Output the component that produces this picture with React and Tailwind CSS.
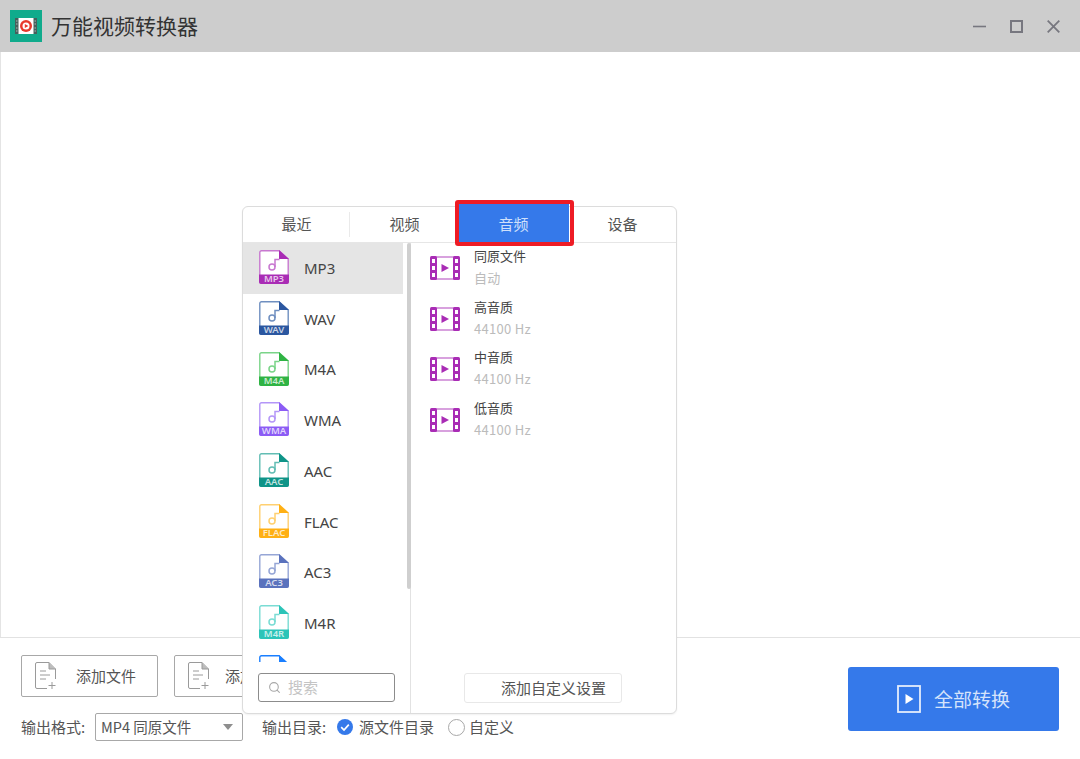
import React from "react";
import { Search } from "lucide-react";

const cjk = "font-['Noto_Sans_CJK_SC','Noto_Sans',sans-serif]";

const formats = [
  { name: "MP3", color: "#a92cb5", light: "#c878d0" },
  { name: "WAV", color: "#2b57a0", light: "#6f8fc0" },
  { name: "M4A", color: "#2fb344", light: "#7ad488" },
  { name: "WMA", color: "#8c5cf5", light: "#b496f8" },
  { name: "AAC", color: "#0f9488", light: "#62bdb4" },
  { name: "FLAC", color: "#ffb014", light: "#ffd070" },
  { name: "AC3", color: "#5a72bd", light: "#96a6d6" },
  { name: "M4R", color: "#2cc4b8", light: "#7adcd4" },
];

const qualities = [
  { title: "同原文件", sub: "自动" },
  { title: "高音质", sub: "44100 Hz" },
  { title: "中音质", sub: "44100 Hz" },
  { title: "低音质", sub: "44100 Hz" },
];

const FileIcon = ({ label, color, light }) => (
  <svg width="30" height="34" viewBox="0 0 30 34" className="shrink-0 mb-[2px]">
    <path d="M2.5.8H20L29.2 9V31.5a1.7 1.7 0 0 1-1.7 1.7H2.5A1.7 1.7 0 0 1 .8 31.5V2.5A1.7 1.7 0 0 1 2.5.8Z" fill="#fff" stroke={light} strokeWidth="1.4" />
    <path d="M20 0 30 9H20Z" fill={color} />
    <path d="M0 24.5H30V32a2 2 0 0 1-2 2H2a2 2 0 0 1-2-2Z" fill={color} />
    <circle cx="13" cy="17" r="3" fill="none" stroke={light} strokeWidth="1.5" />
    <path d="M16 17V9.5H20.5" fill="none" stroke={light} strokeWidth="1.5" />
    <text x="15" y="32.3" textAnchor="middle" fontSize="9.5" fontFamily="Noto Sans, sans-serif" fontWeight="600" fill="#fff" fillOpacity="0.75">{label}</text>
  </svg>
);

const FilmIcon = () => (
  <svg width="30" height="24" viewBox="0 0 30 24" className="shrink-0">
    <rect x="6" y="1" width="18" height="22" fill="#fff" stroke="#cf8ad6" strokeWidth="1.6" />
    <rect x="0" y="0" width="7" height="24" rx="1.5" fill="#a92cb5" />
    <rect x="23" y="0" width="7" height="24" rx="1.5" fill="#a92cb5" />
    <path d="M2 3H5V7H2ZM2 10H5V14H2ZM2 17H5V21H2ZM25 3H28V7H25ZM25 10H28V14H25ZM25 17H28V21H25Z" fill="#fff" />
    <path d="M11.5 8 19 12l-7.5 4Z" fill="#a92cb5" />
  </svg>
);

const AddFileIcon = () => (
  <svg width="22" height="28" viewBox="0 0 22 28" className="shrink-0" fill="none" stroke="#9a9a9a" strokeWidth="1">
    <path d="M12 26.5H2a1.5 1.5 0 0 1-1.5-1.5V2A1.5 1.5 0 0 1 2 .5H14L20.5 7V17" />
    <path d="M14 .5V7H20.5" fill="#bdbdbd" />
    <path d="M5 9H11M5 13H15M5 17H11" />
    <path d="M17 20V27M13.5 23.5H20.5" />
  </svg>
);

const Logo = () => (
  <svg width="32" height="32" viewBox="0 0 32 32" className="shrink-0">
    <rect width="32" height="32" fill="#10ab8c" />
    <rect x="5" y="8" width="22" height="16" fill="#fff" />
    <rect x="5" y="8" width="3.5" height="16" fill="#46605c" />
    <rect x="23.5" y="8" width="3.5" height="16" fill="#46605c" />
    <path d="M6 11H7.5M6 14H7.5M6 18H7.5M6 21H7.5M24.5 11H26M24.5 14H26M24.5 18H26M24.5 21H26" stroke="#a9b8b6" strokeWidth="1" />
    <circle cx="16" cy="16" r="6" fill="#e8392c" />
    <circle cx="16" cy="16" r="3.5" fill="#fff" />
    <path d="M14.8 14 18.4 16l-3.6 2Z" fill="#e8392c" />
  </svg>
);

const AddButton = ({ label, textClass }) => (
  <button className="w-[137px] h-[42px] border border-[#a8a8a8] rounded-[2px] bg-white flex items-center pl-[13px]">
    <AddFileIcon />
    <span className={`text-[15px] text-[#555] whitespace-nowrap ${textClass}`}>{label}</span>
  </button>
);

const Radio = ({ checked }) =>
  checked ? (
    <svg width="16" height="16" viewBox="0 0 16 16" className="shrink-0">
      <circle cx="8" cy="8" r="8" fill="#3579ea" />
      <path d="M4.2 8.2 7 11l4.8-5.4" fill="none" stroke="#fff" strokeWidth="1.7" />
    </svg>
  ) : (
    <span className="block w-[17px] h-[17px] rounded-full border border-[#a8a8a8] shrink-0" />
  );

const FormatPopup = () => (
  <div className="absolute left-[242px] top-[206px] w-[435px] h-[508px] bg-white border border-[#dcdcdc] rounded-[6px] flex flex-col shadow-[0_1px_2px_rgba(0,0,0,0.06)]">
    <div className="h-[36px] flex border-b border-[#e6e6e6] shrink-0 text-[15px] text-[#555]">
      <div className="w-[107px] flex items-center justify-center relative">
        最近
        <span className="absolute right-0 top-[5px] h-[25px] w-px bg-[#eaeaea]" />
      </div>
      <div className="w-[109px] flex items-center justify-center">视频</div>
      <div className="w-[110px] -mt-[3px] pt-[3px] pr-[1px] flex items-center justify-center bg-[#3579ea] text-[#cfe0fb]">音频</div>
      <div className="flex-1 flex items-center justify-center">设备</div>
    </div>

    <div className="flex flex-1 min-h-0">
      <div className="w-[168px] border-r border-[#e2e2e2] flex flex-col relative shrink-0">
        <div className="h-[419px] overflow-hidden shrink-0">
          {formats.map((f, i) => (
            <div key={f.name} className={`w-[160px] h-[50.7px] flex items-center pl-[16px] ${i === 0 ? "bg-[#e5e5e5]" : ""}`}>
              <FileIcon label={f.name} color={f.color} light={f.light} />
              <span className="ml-[15px] text-[15px] text-[#444] font-['Noto_Sans',sans-serif]">{f.name}</span>
            </div>
          ))}
          <div className="pl-[16px] pt-[6px]">
            <FileIcon label="" color="#1a7fff" light="#1a7fff" />
          </div>
        </div>
        <div className="absolute left-[164px] top-0 w-[4px] h-[346px] bg-[#cfcfcf] rounded-[2px]" />
        <div className="mt-[11px] ml-[15px] w-[137px] h-[29px] border border-[#8c8c8c] rounded-[3px] flex items-center pl-[9px]">
          <Search size={13} color="#a8a8a8" />
          <span className="ml-[7px] text-[15px] text-[#c4c4c4]">搜索</span>
        </div>
      </div>

      <div className="flex-1 flex flex-col">
        <div className="flex-1">
          {qualities.map((q) => (
            <div key={q.title} className="h-[50.7px] flex items-start pl-[19px] pt-[13px]">
              <FilmIcon />
              <div className="ml-[14px] -mt-[9px]">
                <div className="text-[13px] leading-[18px] text-[#444]">{q.title}</div>
                <div className="mt-[4px] text-[13px] leading-[18px] tracking-[0.3px] text-[#bbb]">{q.sub}</div>
              </div>
            </div>
          ))}
        </div>
        <button className="ml-[53px] mb-[10px] w-[158px] h-[30px] border border-[#e8e8e8] rounded-[3px] text-[15px] text-[#555] text-left pl-[36px] whitespace-nowrap">
          添加自定义设置
        </button>
      </div>
    </div>

    {/* 红框标注 */}
    <div className="absolute left-[212px] -top-[7px] w-[119px] h-[46px] border-[4px] border-[#ee1c25] rounded-[3px]" />
  </div>
);

const App = () => {
  return (
    <div className={`relative w-full h-screen flex flex-col bg-white overflow-hidden ${cjk}`}>
      <div className="h-[52px] bg-[#cdcdcd] flex items-center pl-[10px] pr-[20px] shrink-0">
        <Logo />
        <span className="ml-[9px] text-[21px] text-[#333] whitespace-nowrap">万能视频转换器</span>
        <div className="ml-auto flex items-center gap-[24px] text-[#77777f]">
          <svg width="13" height="13" viewBox="0 0 13 13"><path d="M0 6.5H13" stroke="currentColor" strokeWidth="1.6" /></svg>
          <svg width="13" height="13" viewBox="0 0 13 13"><rect x="1" y="1" width="11" height="11" fill="none" stroke="currentColor" strokeWidth="2" /></svg>
          <svg width="13" height="13" viewBox="0 0 13 13"><path d="M.7.7 12.3 12.3M12.3.7.7 12.3" stroke="currentColor" strokeWidth="1.8" /></svg>
        </div>
      </div>

      <div className="flex-1 border-l border-[#e4e4e4]" />

      <div className="h-[122px] border-t border-[#e2e2e2] shrink-0 flex justify-between pl-[21px] pr-[21px]">
        <div className="pt-[17px]">
          <div className="flex gap-[16px]">
            <AddButton label="添加文件" textClass="ml-[19px]" />
            <AddButton label="添加" textClass="ml-[15px]" />
          </div>
          <div className="mt-[16px] flex items-center h-[28px] text-[15px] text-[#555]">
            <span className="w-[74px] whitespace-nowrap">输出格式:</span>
            <div className="w-[148px] h-[28px] border border-[#a8a8a8] rounded-[2px] flex items-center justify-between pl-[5px] pr-[9px] text-[#555]">
              <span className="whitespace-nowrap text-[14.5px]">MP4 同原文件</span>
              <span className="w-0 h-0 border-x-[5.5px] border-x-transparent border-t-[6px] border-t-[#8e8e8e]" />
            </div>
            <span className="ml-[19px] w-[75px] whitespace-nowrap">输出目录:</span>
            <Radio checked />
            <span className="ml-[6px] whitespace-nowrap">源文件目录</span>
            <span className="ml-[14px]"><Radio /></span>
            <span className="ml-[4px] whitespace-nowrap">自定义</span>
          </div>
        </div>
        <button className="mt-[29px] w-[211px] h-[64px] bg-[#3579ea] rounded-[3px] flex items-center justify-center text-[#d5e3fb] text-[19px]">
          <svg width="24" height="28" viewBox="0 0 24 28" className="shrink-0">
            <rect x="1" y="1" width="22" height="26" fill="none" stroke="#e4edfc" strokeWidth="1.8" />
            <path d="M8.5 9 16.5 14l-8 5Z" fill="#fff" />
          </svg>
          <span className="ml-[13px]">全部转换</span>
        </button>
      </div>

      <FormatPopup />
    </div>
  );
};

export default App;
